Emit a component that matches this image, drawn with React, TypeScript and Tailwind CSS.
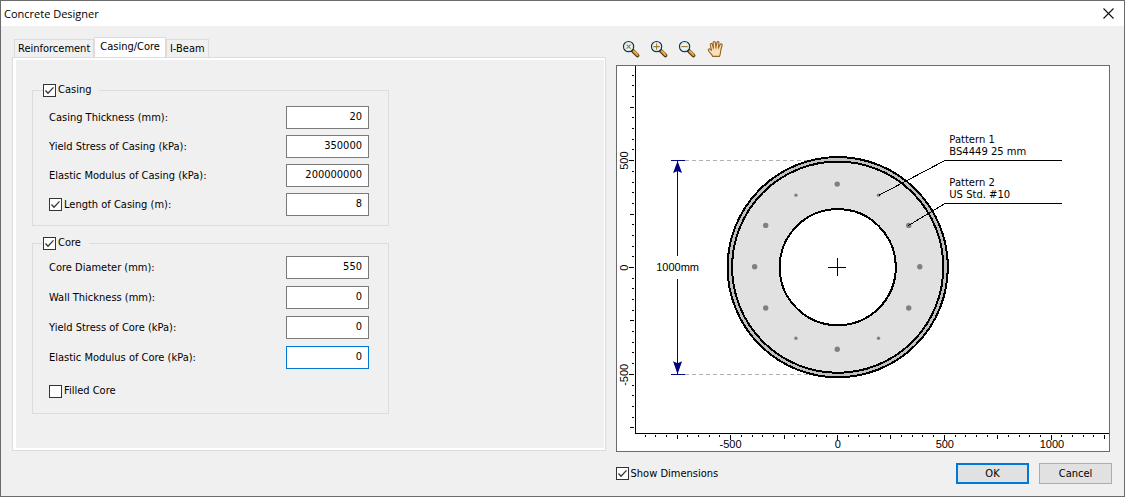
import React, { useState } from "react"

// Drawing scale: pixels per millimetre, and where the section centre sits in the view
const SCALE = 0.2137
const CX = 220.5
const CY = 201.5

const px = (mm: number) => Math.round(CX + mm * SCALE - 0.5) + 0.5
const py = (mm: number) => Math.round(CY - mm * SCALE - 0.5) + 0.5

const range = (from: number, to: number, step: number) => {
  const out: number[] = []
  for (let v = from; v <= to; v += step) out.push(v)
  return out
}

const tickLength = (v: number) => (v % 500 === 0 ? 5 : v % 250 === 0 ? 4 : 2)

const casingRows = [
  { id: "casing-thickness", label: "Casing Thickness (mm):", value: "20" },
  { id: "casing-yield", label: "Yield Stress of Casing (kPa):", value: "350000" },
  { id: "casing-modulus", label: "Elastic Modulus of Casing (kPa):", value: "200000000" },
]

const coreRows = [
  { id: "core-diameter", label: "Core Diameter (mm):", value: "550" },
  { id: "core-wall", label: "Wall Thickness (mm):", value: "0" },
  { id: "core-yield", label: "Yield Stress of Core (kPa):", value: "0" },
  { id: "core-modulus", label: "Elastic Modulus of Core (kPa):", value: "0", active: true },
]

// angle in degrees clockwise from the top, size is half of the marker
const bars = range(0, 330, 30).map((angle) => ({
  angle,
  size: angle % 180 === 30 || angle % 180 === 150 ? 2 : 3,
}))

const callouts = [
  { title: "Pattern 1", detail: "BS4449 25 mm", x: 262, y: 129, lineY: 94.5 },
  { title: "Pattern 2", detail: "US Std. #10", x: 291, y: 159.5, lineY: 137.5 },
]

const Check = ({ id, label, checked }: { id: string, label: string, checked?: boolean }) => (
  <label htmlFor={id} className="inline-flex items-center gap-0.5 whitespace-nowrap">
    <span className="grid size-[13px]">
      <input
        id={id}
        type="checkbox"
        defaultChecked={checked}
        className="peer size-[13px] appearance-none border border-[#333] bg-white [grid-area:1/1]"
      />
      <svg viewBox="0 0 13 13" className="pointer-events-none hidden size-[13px] [grid-area:1/1] peer-checked:block">
        <path d="M2.5 6.5 L5 9.2 L10.5 3.4" fill="none" stroke="#333" strokeWidth="1.3" />
      </svg>
    </span>
    {label}
  </label>
)

const NumberBox = ({ id, value, active, label }: { id: string, value: string, active?: boolean, label?: string }) => (
  <input
    id={id}
    type="text"
    defaultValue={value}
    aria-label={label}
    className={`h-[23px] w-[83px] border bg-white px-1.5 pb-0.5 text-right outline-none ${active ? "border-[#0078d7]" : "border-[#7a7a7a]"}`}
  />
)

const Row = ({ id, label, value, active }: { id: string, label: string, value: string, active?: boolean }) => (
  <div className="flex items-center justify-between">
    <label htmlFor={id}>{label}</label>
    <NumberBox id={id} value={value} active={active} />
  </div>
)

const Magnifier = ({ children }: { children: React.ReactNode }) => (
  <svg viewBox="0 0 18 18" className="size-[18px]">
    <path d="M10.6 10.6 L15.4 15.4" stroke="#4a3414" strokeWidth="3.8" strokeLinecap="round" />
    <path d="M11.6 11.2 L15.4 15" stroke="#dc9a35" strokeWidth="2.4" strokeLinecap="round" />
    <path d="M12.2 11.2 L15.4 14.2" stroke="#f6cd7c" strokeWidth="0.9" />
    <circle cx="6.6" cy="6.6" r="5.1" fill="#e6f5f7" stroke="#20282c" strokeWidth="1.2" />
    <circle cx="6.6" cy="6.6" r="4.1" fill="none" stroke="#bcdce4" strokeWidth="0.8" />
    <g stroke="#a87a30" strokeWidth="1.1">{children}</g>
  </svg>
)

const Hand = () => (
  <svg viewBox="0 0 18 18" className="size-[18px]">
    <path
      d="M6.6 16.4 C6.2 14.6 4.6 13.2 3.2 11.6 C2.2 10.4 2 9.2 2.9 8.9 C3.8 8.6 4.6 9.4 5.5 10.4 L4.3 4.9 C4 3.4 5.9 3 6.3 4.4 L7.4 8 L7.2 2.6 C7.2 1.1 9.2 1.1 9.4 2.6 L9.9 7.6 L10.9 2.5 C11.2 1.1 13.1 1.4 12.9 2.9 L12.4 8 L14.2 4.6 C14.9 3.3 16.6 4.1 16.1 5.5 L14.8 10 C14.6 12.6 14.3 14.4 13.6 16.4 Z"
      fill="#f7e0bd"
      stroke="#9a6420"
      strokeWidth="1.1"
      strokeLinejoin="round"
    />
    <path d="M7.4 8 V9.4 M9.9 7.6 V9.2 M12.4 8 V9.4" stroke="#c48c42" strokeWidth="0.9" />
  </svg>
)

const tools = [
  { name: "Zoom extents", icon: <Magnifier><path d="M4.6 4.6 L8.6 8.6 M8.6 4.6 L4.6 8.6" /></Magnifier> },
  { name: "Zoom in", icon: <Magnifier><path d="M3.4 6.6 H9.8 M6.6 3.4 V9.8" /></Magnifier> },
  { name: "Zoom out", icon: <Magnifier><path d="M3.4 6.6 H9.8" /></Magnifier> },
  { name: "Pan", icon: <Hand /> },
]

const SectionDrawing = () => (
  <svg viewBox="0 0 492 385" className="block w-full" role="img" aria-label="Pile section">
    {/* rulers */}
    <g stroke="#000" shapeRendering="crispEdges">
      <path d="M18.5 0 V367.5 H492" fill="none" />
      {range(-900, 1250, 50).map((v) => (
        <line key={`x${v}`} x1={px(v)} x2={px(v)} y1={369} y2={369 + tickLength(v)} />
      ))}
      {range(-750, 900, 50).map((v) => (
        <line key={`y${v}`} x1={17 - tickLength(v)} x2={17} y1={py(v)} y2={py(v)} />
      ))}
    </g>
    <g className="font-['Liberation_Sans',sans-serif] text-[11px]" textAnchor="middle">
      {range(-500, 1000, 500).map((v) => (
        <text key={v} x={px(v)} y={382}>{v}</text>
      ))}
      {range(-500, 500, 500).map((v) => (
        <text key={v} transform={`translate(11 ${py(v)}) rotate(-90)`}>{v}</text>
      ))}
    </g>

    {/* overall dimension */}
    <g shapeRendering="crispEdges">
      <path d="M68 94.5 H220 M68 308.5 H220" stroke="#b0b0b0" strokeDasharray="4 3" />
      <path d="M54 94.5 H68 M54 308.5 H68 M60.5 95 V190 M60.5 213 V308" stroke="#000080" />
    </g>
    <path d="M60.5 95 L65 107 L60.5 105 L56 107 Z M60.5 308 L65 295 L60.5 297 L56 295 Z" fill="#000080" />
    <text x={60.5} y={205} textAnchor="middle" className="font-['Liberation_Sans',sans-serif] text-[11px]">1000mm</text>

    {/* casing, concrete, core */}
    <g stroke="#000" strokeWidth="2" shapeRendering="crispEdges">
      <circle cx={CX} cy={CY - 0.5} r={110} fill="#c0c0c0" />
      <circle cx={CX} cy={CY - 0.5} r={105.5} fill="#e1e1e1" />
      <circle cx={CX} cy={CY - 0.5} r={58} fill="#fff" />
    </g>
    <path d="M211 201.5 H229 M220.5 192 V210" stroke="#000" shapeRendering="crispEdges" />

    {bars.map(({ angle, size }) => {
      const a = (angle * Math.PI) / 180
      return (
        <circle
          key={angle}
          cx={220 + 82.5 * Math.sin(a)}
          cy={200.5 - 82.5 * Math.cos(a)}
          r={size - 0.3}
          fill="#808080"
        />
      )
    })}

    {callouts.map((c) => (
      <g key={c.title}>
        <path
          d={`M${c.x} ${c.y} L327.5 ${c.lineY} H445`}
          fill="none"
          stroke="#000"
          shapeRendering="crispEdges"
        />
        <g className="font-['DejaVu_Sans',sans-serif] text-[10px]">
          <text x={332} y={c.lineY - 18}>{c.title}</text>
          <text x={332} y={c.lineY - 6}>{c.detail}</text>
        </g>
      </g>
    ))}
  </svg>
)

const tabs = ["Reinforcement", "Casing/Core", "I-Beam"]

export default function App() {
  const [tab, setTab] = useState("Casing/Core")

  return (
    <div className="flex min-h-screen flex-col border border-[#6b6b6b] bg-[#f0f0f0] font-['DejaVu_Sans_Condensed','DejaVu_Sans',sans-serif] text-[11px] leading-[14px] text-black">
      <header className="flex h-[25px] items-center justify-between bg-white pr-2 pl-[3px] font-['Open_Sans',sans-serif]">
        <h1>Concrete Designer</h1>
        <button type="button" aria-label="Close" className="grid size-4 place-items-center">
          <svg viewBox="0 0 11 11" className="size-[11px]">
            <path d="M0.5 0.5 L10.5 10.5 M10.5 0.5 L0.5 10.5" stroke="#111" strokeWidth="1.1" />
          </svg>
        </button>
      </header>

      <main className="grid flex-1 grid-cols-[593fr_496fr] items-start gap-2.5 pr-3 pl-[11px]">
        <section className="pt-[11px]">
          <div role="tablist" className="flex h-5 items-end pl-0.5">
            {tabs.map((t) => (
              <button
                key={t}
                type="button"
                role="tab"
                aria-selected={t === tab}
                onClick={() => setTab(t)}
                className={`border border-b-0 border-[#dcdcdc] ${t === tab ? "h-5 bg-white px-[5px] pb-0.5" : "h-[18px] px-[3px]"}`}
              >
                {t}
              </button>
            ))}
          </div>

          <div className="border border-[#dcdcdc]">
            <div className="h-[392px] border-y-2 border-r border-l-[3px] border-white pt-[22px] pl-4">
              <fieldset className="w-full max-w-[357px] border border-[#dcdcdc] pb-[9px]">
                <legend className="ml-2.5 flex h-4 items-center pr-2">
                  <Check id="casing" label="Casing" checked />
                </legend>
                <div className="flex flex-col gap-1.5 pt-2 pr-[19px] pl-4">
                  {casingRows.map((r) => (
                    <Row key={r.id} {...r} />
                  ))}
                  <div className="flex items-center justify-between">
                    <Check id="casing-length-on" label="Length of Casing (m):" checked />
                    <NumberBox id="casing-length" value="8" label="Length of Casing (m)" />
                  </div>
                </div>
              </fieldset>

              <fieldset className="mt-[9px] w-full max-w-[357px] border border-[#dcdcdc] pb-[7px]">
                <legend className="ml-2.5 flex h-4 items-center pr-2">
                  <Check id="core" label="Core" checked />
                </legend>
                <div className="flex flex-col gap-[7px] pt-[5px] pr-[19px] pl-4">
                  {coreRows.map((r) => (
                    <Row key={r.id} {...r} />
                  ))}
                  <div className="flex h-[30px] items-center">
                    <Check id="filled-core" label="Filled Core" />
                  </div>
                </div>
              </fieldset>
            </div>
          </div>
        </section>

        <section className="pt-3.5">
          <div className="flex gap-2.5 pl-1.5">
            {tools.map((t) => (
              <button key={t.name} type="button" aria-label={t.name} title={t.name}>
                {t.icon}
              </button>
            ))}
          </div>
          <div className="mt-[7px] mr-0.5 border border-[#6b6b6b] bg-white">
            <SectionDrawing />
          </div>
          <div className="mt-[11px] flex items-center gap-2.5">
            <Check id="show-dimensions" label="Show Dimensions" checked />
            <button type="button" className="ml-auto h-[21px] w-[73px] border-2 border-[#0078d7] bg-[#e1e1e1]">
              OK
            </button>
            <button type="button" className="h-[21px] w-[73px] border border-[#adadad] bg-[#e1e1e1]">
              Cancel
            </button>
          </div>
        </section>
      </main>
    </div>
  )
}
